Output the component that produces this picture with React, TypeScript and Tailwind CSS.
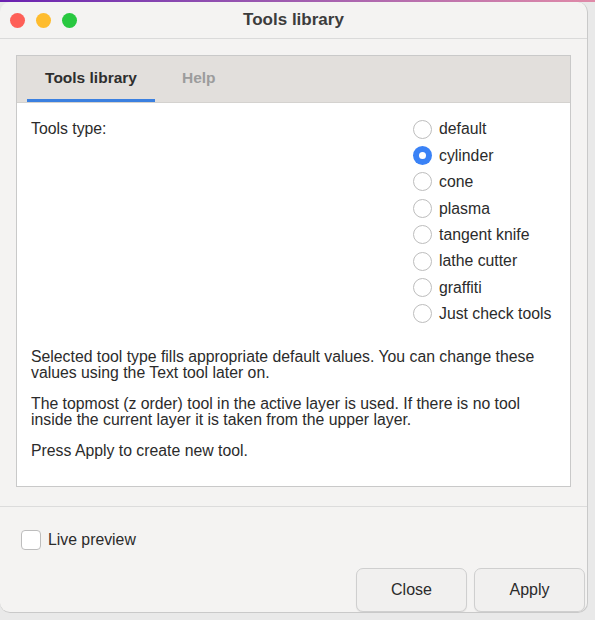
const tools = ['default', 'cylinder', 'cone', 'plasma', 'tangent knife', 'lathe cutter', 'graffiti', 'Just check tools']

function Radio({ label, checked }: { label: string, checked?: boolean }) {
  return (
    <div className="flex items-center h-[26.4px] whitespace-nowrap">
      {checked ? (
        <div className="w-[19px] h-[19px] shrink-0 rounded-full bg-[#3a82f6] flex items-center justify-center">
          <div className="w-[7px] h-[7px] rounded-full bg-white" />
        </div>
      ) : (
        <div className="w-[19px] h-[19px] shrink-0 rounded-full bg-white border border-[#bdbdbd]" />
      )}
      <span className="ml-[7px] text-[15.8px] text-[#2b2b2b]">{label}</span>
    </div>
  )
}

export default function App() {
  return (
    <div className="w-[595px] h-[620px] bg-[#e9e9e9] flex flex-col overflow-hidden" style={{ fontFamily: '"Liberation Sans", Arial, sans-serif' }}>
      <div className="h-[2px] shrink-0 bg-gradient-to-r from-[#6a1fb0] to-[#e08aa8]" />
      <div className="w-[588px] h-[611px] shrink-0 rounded-[10px] bg-[#f4f3f2] border-r border-b border-[#c9c9c9] flex flex-col overflow-hidden">
        <div className="h-[37px] shrink-0 flex items-center border-b border-[#dadada]">
          <div className="w-[100px] flex gap-[11px] pl-[10px]">
            <div className="w-[15px] h-[15px] rounded-full bg-[#fe5f57]" />
            <div className="w-[15px] h-[15px] rounded-full bg-[#febc2e]" />
            <div className="w-[15px] h-[15px] rounded-full bg-[#28c840]" />
          </div>
          <div className="flex-1 text-center font-bold text-[17px] text-[#3c3c3c]">Tools library</div>
          <div className="w-[100px]" />
        </div>

        <div className="mt-[16px] mx-[16px] h-[435px] border border-[#c9c9c9] flex flex-col bg-white">
          <div className="h-[47px] bg-[#e2dfdc] flex items-end pl-[10px] border-b border-[#d4d2cf]">
            <div className="w-[128px] h-full flex flex-col">
              <div className="flex-1 flex items-center justify-center font-bold text-[15.5px] text-[#2e2e2e] pt-[1px]">Tools library</div>
              <div className="h-[3px] bg-[#3b80e0]" />
            </div>
            <div className="ml-[27px] h-full flex items-center font-bold text-[15.5px] text-[#9c9c9c] pb-[2px]">Help</div>
          </div>
          <div className="flex-1 px-[14px] pt-[13px] text-[15.8px] text-[#2b2b2b]">
            <div className="flex justify-between">
              <div className="pt-[1px]">Tools type:</div>
              <div className="flex flex-col w-[143px]">
                {tools.map(t => (
                  <Radio key={t} label={t} checked={t === 'cylinder'} />
                ))}
              </div>
            </div>
            <div className="mt-[22px] leading-[16px] whitespace-nowrap">
              <p>Selected tool type fills appropriate default values. You can change these<br />values using the Text tool later on.</p>
              <p className="mt-[15px]">The topmost (z order) tool in the active layer is used. If there is no tool<br />inside the current layer it is taken from the upper layer.</p>
              <p className="mt-[15px]">Press Apply to create new tool.</p>
            </div>
          </div>
        </div>

        <div className="mt-[19px] border-t border-[#dcdcdc]" />
        <div className="flex items-center mt-[21px] ml-[21px]">
          <div className="w-[20px] h-[20px] rounded-[4px] border border-[#bdbdbd] bg-white" />
          <span className="ml-[7px] text-[15.8px] text-[#2b2b2b]">Live preview</span>
        </div>
        <div className="flex justify-end gap-[7px] mt-[16px] pr-[2px]">
          <button className="w-[111px] h-[44px] rounded-[7px] border border-[#cfcfcf] bg-[#f1f0ef] text-[16px] text-[#2b2b2b] shadow-[0_1px_1px_rgba(0,0,0,0.08)]">Close</button>
          <button className="w-[111px] h-[44px] rounded-[7px] border border-[#cfcfcf] bg-[#f1f0ef] text-[16px] text-[#2b2b2b] shadow-[0_1px_1px_rgba(0,0,0,0.08)]">Apply</button>
        </div>
      </div>
    </div>
  )
}
